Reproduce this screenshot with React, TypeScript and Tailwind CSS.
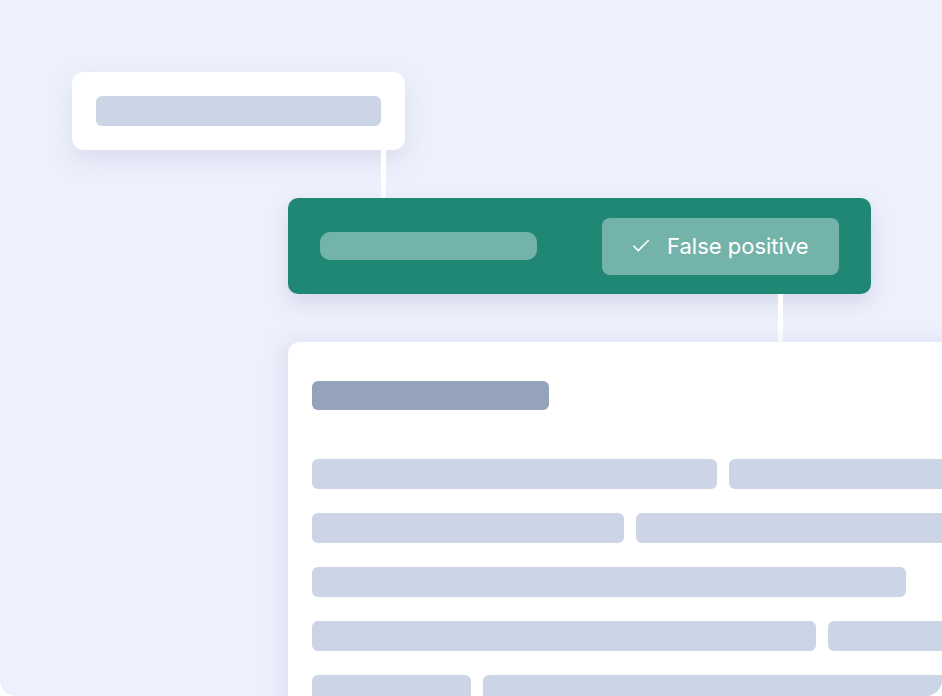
import { Check } from "lucide-react";

const rows = [
  [405, 400],
  [312, 400],
  [594],
  [504, 200],
  [159, 500],
];

export default function App() {
  return (
    <div className="w-[942px] h-[696px] overflow-hidden rounded-b-2xl bg-[#eef1fc] pt-[72px] font-['Inter',sans-serif]">
      {/* top card */}
      <div className="ml-[72px] w-[333px] h-[78px] bg-white rounded-xl p-6 shadow-[0_10px_24px_rgba(120,130,170,0.18)]">
        <div className="h-[30px] bg-[#cbd5e5] rounded-md" />
      </div>
      <div className="ml-[381px] w-[5px] h-[48px] bg-white" />

      {/* green bar */}
      <div className="ml-[288px] w-[583px] h-[96px] bg-[#208775] rounded-[10px] flex items-center justify-between pl-8 pr-8 shadow-[0_8px_20px_rgba(100,110,150,0.2)]">
        <div className="w-[217px] h-[28px] bg-[#74b3aa] rounded-[10px]" />
        <button className="w-[237px] h-[57px] bg-[#74b3aa] rounded-lg flex items-center gap-[15px] pl-7 text-white text-[22px]">
          <Check size={22} strokeWidth={1.75} />
          <span>False positive</span>
        </button>
      </div>
      <div className="ml-[778px] w-[5px] h-[48px] bg-white" />

      {/* detail card */}
      <div className="ml-[288px] w-[720px] h-[400px] bg-white rounded-tl-xl pt-[39px] pl-6 shadow-[-6px_0_20px_rgba(120,130,170,0.15)]">
        <div className="w-[237px] h-[29px] bg-[#94a3b9] rounded-md" />
        <div className="mt-[49px] flex flex-col gap-[24px]">
          {rows.map((row, i) => (
            <div key={i} className="flex gap-3">
              {row.map((w, j) => (
                <div
                  key={j}
                  className="h-[30px] bg-[#cbd5e5] rounded-md shrink-0"
                  style={{ width: w }}
                />
              ))}
            </div>
          ))}
        </div>
      </div>
    </div>
  );
}
